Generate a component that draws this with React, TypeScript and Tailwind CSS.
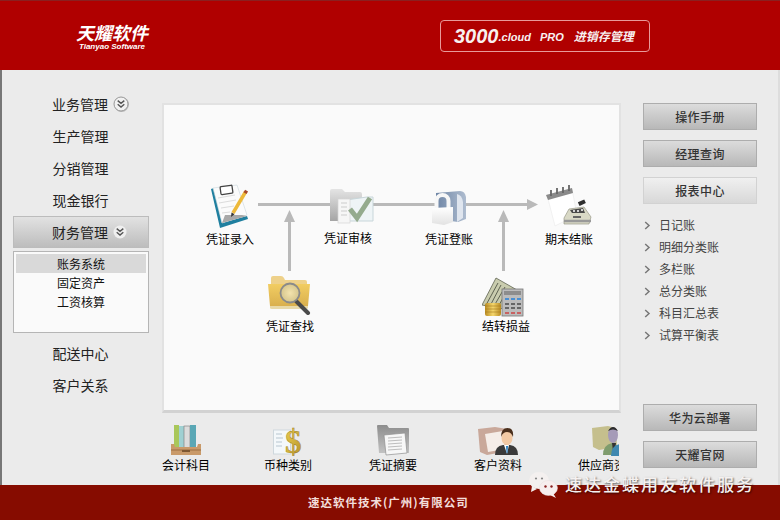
import React from "react";

const FONT = '[font-family:"Noto_Sans_CJK_SC","Liberation_Sans",sans-serif]';

function Chevrons({ flat = false }: { flat?: boolean }) {
  return (
    <svg width="18" height="18" viewBox="0 0 18 18" className="shrink-0">
      {!flat && <circle cx="9.5" cy="9.5" r="7.5" fill="#bbb" />}
      <circle cx="9" cy="9" r={flat ? 6.5 : 7} fill={flat ? "#efefef" : "#f1f1f1"} stroke={flat ? "none" : "#999"} />
      <path d="M5.7 5.6 9 8.4l3.3-2.8M5.7 9.2 9 12l3.3-2.8" fill="none" stroke="#555" strokeWidth="1.4" />
    </svg>
  );
}

function NavItem({ label }: { label: string }) {
  return <div className="flex h-[32px] w-[135px] items-center justify-center text-[14px] text-[#222]">{label}</div>;
}

function GrayButton({ label, light = false }: { label: string; light?: boolean }) {
  return (
    <div
      className={
        light
          ? "flex h-[27px] w-[114px] items-center justify-center border border-[#d2d2d2] bg-gradient-to-b from-[#f0f0f0] to-[#d8d8d8] text-[12px] font-medium tracking-[0.4px] text-[#333]"
          : "flex h-[27px] w-[114px] items-center justify-center border border-[#adadad] bg-gradient-to-b from-[#dcdcdc] to-[#b8b8b8] text-[12px] font-medium tracking-[0.4px] text-[#333]"
      }
    >
      {label}
    </div>
  );
}

function IconEntry() {
  return (
    <svg width="40" height="45" viewBox="0 0 40 45">
      <path d="M1 5 10 44l28-9-1-3-25 7L4 4z" fill="#1f7f9f" />
      <path d="M3 4 27 1l10 30-25 8z" fill="#fbfbfb" stroke="#c9d6dc" strokeWidth=".6" />
      <path d="M12 39l3-8 17 0 5 1z" fill="#a8a8a8" />
      <path d="M8 14l17-3M9 19l17-3M11 24l13-2M12 29l8-1" stroke="#dcdcdc" strokeWidth="1" />
      <rect x="10.500" y="2" width="12" height="8" rx="1" transform="rotate(-8 16 6)" fill="#fff" stroke="#444" strokeWidth="1.300" />
      <path d="M35.500 8 23 29" stroke="#edb93a" strokeWidth="3.500" />
      <path d="M34.300 7l3 1.800" stroke="#a7482b" strokeWidth="3" />
      <path d="M21.500 28.500 24.500 30.300 21 33z" fill="#333" />
    </svg>
  );
}

function IconAudit() {
  return (
    <svg width="46" height="36" viewBox="0 0 46 36">
      <defs>
        <linearGradient id="au" x1="0" y1="0" x2="0" y2="1">
          <stop offset="0" stopColor="#e4e4e4" />
          <stop offset="1" stopColor="#a5a5a5" />
        </linearGradient>
      </defs>
      <path d="M1 3q0-2 2-2h10l3 3h15q2 0 2 2v27H1z" fill="url(#au)" />
      <path d="M10 13 38 9h6v24H12z" fill="#eef4f6" stroke="#c8d6da" strokeWidth="1" />
      <rect x="9" y="11" width="12" height="24" fill="#f6f6f6" stroke="#d5d5d5" strokeWidth=".7" />
      <path d="M12 15h6M12 19h6M12 23h6M12 27h6" stroke="#ccc" />
      <path d="M21 21l7 9L41 10" fill="none" stroke="#94ab8e" strokeWidth="5" />
    </svg>
  );
}

function IconPost() {
  return (
    <svg width="38" height="36" viewBox="0 0 38 36">
      <defs>
        <linearGradient id="po" x1="0" y1="0" x2="1" y2="0">
          <stop offset="0" stopColor="#6f86a6" />
          <stop offset="1" stopColor="#aebccf" />
        </linearGradient>
        <linearGradient id="lk" x1="0" y1="0" x2="0" y2="1">
          <stop offset="0" stopColor="#ffffff" />
          <stop offset="1" stopColor="#e2e2e2" />
        </linearGradient>
      </defs>
      <path d="M6 3 30 1q5 0 6 6v22l-8 3-22-3z" fill="url(#po)" />
      <path d="M27 4q5 1 6 8v16l-6 4z" fill="#dfe5ee" />
      <path d="M6.500 18v-7a6 6 0 0 1 12 0v7" fill="none" stroke="#f7f7f7" strokeWidth="4" />
      <path d="M2 18 23 17v15l-9 3-12-2z" fill="url(#lk)" />
    </svg>
  );
}

function IconClose() {
  return (
    <svg width="46" height="42" viewBox="0 0 46 42">
      <path d="M1 10 26 4l5 26-22 11z" fill="#fff" stroke="#eaeaea" strokeWidth=".6" />
      <path d="M0 10 26 3l1 5L2 15z" fill="#8a8a8a" />
      <path d="M5 11V5M11 9V3M17 8V2M23 6V0" stroke="#666" strokeWidth="1.800" />
      <path d="M18 33 23 24l15-2 7 10-2 7H18z" fill="#d9d9c6" stroke="#8a8a78" strokeWidth=".6" />
      <path d="M24 25l13-2 2 5H26z" fill="#4a4a4a" />
      <rect x="32" y="16" width="7" height="4" transform="rotate(-25 35 17)" fill="#2e2e2e" />
      <path d="M27 26h2M31 26h2M35 25h2" stroke="#fff" strokeWidth="1.500" />
      <path d="M18 36h27" stroke="#999" strokeWidth="2.500" />
      <rect x="27" y="31" width="8" height="2" fill="#666" />
    </svg>
  );
}

function IconSearch() {
  return (
    <svg width="44" height="40" viewBox="0 0 44 40">
      <defs>
        <linearGradient id="fo" x1="0" y1="0" x2="0" y2="1">
          <stop offset="0" stopColor="#f2cd62" />
          <stop offset="1" stopColor="#d7ad4c" />
        </linearGradient>
        <radialGradient id="gl">
          <stop offset="0" stopColor="#f3e3ae" />
          <stop offset="1" stopColor="#d5c58c" />
        </radialGradient>
      </defs>
      <path d="M4 3q0-2 2-2h8q2 0 3 2l1 2h20q2 0 2 2v3H4z" fill="#eed18a" />
      <path d="M1 9h42l-2 22q0 2-3 2H5q-2 0-2-2z" fill="url(#fo)" />
      <path d="M3 31h38v2q0 1-3 1H5q-2 0-2-1z" fill="#e8d9a8" />
      <path d="M29 26 41 38" stroke="#4a4a4a" strokeWidth="4" strokeLinecap="round" />
      <circle cx="23" cy="18" r="9.500" fill="url(#gl)" stroke="#8a8a8a" strokeWidth="1.800" />
    </svg>
  );
}

function IconProfit() {
  return (
    <svg width="44" height="40" viewBox="0 0 44 40">
      <defs>
        <linearGradient id="co" x1="0" y1="0" x2="1" y2="0">
          <stop offset="0" stopColor="#b98b22" />
          <stop offset=".5" stopColor="#f4d66c" />
          <stop offset="1" stopColor="#b98b22" />
        </linearGradient>
      </defs>
      <path d="M0 28 14 1l21 12-8 20z" fill="#c9ccae" stroke="#5f6352" strokeWidth=".8" />
      <path d="M4 28 16 6M8 29 19 8M12 29 23 10M16 30 26 12" stroke="#5f6352" strokeWidth="1" />
      <rect x="20" y="12" width="21" height="27" fill="#bcbcbc" stroke="#777" strokeWidth=".8" />
      <rect x="22" y="14" width="17" height="4" fill="#8d8d8d" />
      <path d="M23 22h4M29 22h4M35 22h4" stroke="#4a8fd2" strokeWidth="2" />
      <path d="M23 27h4M29 27h4M35 27h4M23 31h4M29 31h4M35 31h4" stroke="#666" strokeWidth="2" />
      <path d="M23 36h4M29 36h4M35 36h4" stroke="#c44" strokeWidth="1.500" />
      <rect x="3" y="26" width="16" height="13" rx="2" fill="url(#co)" />
      <path d="M3 29h16M3 32h16M3 35h16" stroke="#a47a1c" strokeWidth=".6" />
    </svg>
  );
}

function IconLedger() {
  return (
    <svg width="30" height="32" viewBox="0 0 30 32">
      <rect x="3" y="1" width="5" height="23" fill="#a9c75a" />
      <rect x="8" y="2" width="5" height="22" fill="#9fd0d2" />
      <rect x="13" y="2" width="6" height="22" fill="#dcdcdc" stroke="#777" strokeWidth=".6" />
      <rect x="19" y="1" width="6" height="23" fill="#5aa7b5" />
      <path d="M0 20h3l1 3h22l1-3h3v11H0z" fill="#c99a6a" />
      <path d="M0 26h30" stroke="#9c6f42" strokeWidth="1" />
      <rect x="11" y="26" width="8" height="2" fill="#7e5731" />
    </svg>
  );
}

function IconDollar() {
  return (
    <svg width="30" height="30" viewBox="0 0 30 30">
      <defs>
        <linearGradient id="go" x1="0" y1="0" x2="1" y2="1">
          <stop offset="0" stopColor="#f0d24e" />
          <stop offset="1" stopColor="#b3902c" />
        </linearGradient>
      </defs>
      <rect x="0.500" y="4" width="17" height="24" fill="#f4f8fa" stroke="#cfd8dd" />
      <path d="M3 8h6M3 12h7M3 16h6M3 20h6" stroke="#b8c6d0" />
      <text x="12" y="26.500" fontFamily="Liberation Serif, serif" fontWeight="700" fontSize="33" fill="url(#go)" stroke="#96761a" strokeWidth=".4">$</text>
    </svg>
  );
}

function IconSummary() {
  return (
    <svg width="32" height="32" viewBox="0 0 32 32">
      <defs>
        <linearGradient id="su" x1="0" y1="0" x2="0" y2="1">
          <stop offset="0" stopColor="#8d8d8d" />
          <stop offset="1" stopColor="#c2c2c2" />
        </linearGradient>
      </defs>
      <path d="M0 2q0-1 1-1h9l2 3h19q1 0 1 1v24H2z" fill="url(#su)" />
      <path d="M7 11 28 9 30 29 9 31z" fill="#f7f7f7" stroke="#8f8f8f" strokeWidth=".7" />
      <path d="M11 14l14-1M11 17l14-1M11 20l14-1M11 23l14-1M11 26l14-1" stroke="#bdbdbd" />
    </svg>
  );
}

function IconCustomer() {
  return (
    <svg width="42" height="30" viewBox="0 0 42 30">
      <path d="M1 3 18 1l12 2 2 22-22 4-7-3z" fill="#c9a89a" />
      <path d="M8 8 26 5l2 18-17 3z" fill="#f5ede8" />
      <path d="M18 29q0-9 8-10h7q8 1 8 10z" fill="#3a3a3a" />
      <path d="M27 19h5l-2 9z" fill="#fff" />
      <path d="M29 20h2l-.5 7h-1z" fill="#2b7fc0" />
      <ellipse cx="30" cy="12" rx="5.500" ry="7" fill="#f2c9a4" />
      <path d="M24 11q0-9 6.500-9T36 11q-2-5-6-5t-6 5z" fill="#4a2f1c" />
    </svg>
  );
}

function IconSupplier() {
  return (
    <svg width="40" height="31" viewBox="0 0 40 31">
      <path d="M1 3 17 1l8 2 1 19-18 3-6-3z" fill="#c5bf8d" />
      <ellipse cx="22" cy="10" rx="5" ry="8" fill="#a59bb8" />
      <path d="M17 6q5-8 10 0-5-3-10 0z" fill="#2c2c2c" />
      <path d="M12 30q0-10 9-12h3l-1 12z" fill="#7f9c6d" />
      <path d="M21 18h4l-1 8h-2z" fill="#333" />
      <path d="M20 31q0-11 9-12h6q5 2 5 12z" fill="#3f88b0" />
    </svg>
  );
}

function BottomItem({ label, children, className }: { label: string; children: React.ReactNode; className: string }) {
  return (
    <div className={"flex w-[72px] shrink-0 flex-col items-center " + className}>
      <div className="flex h-[43px] items-end justify-center">{children}</div>
      <div className="mt-[1px] whitespace-nowrap text-[12px] leading-[16px] text-black">{label}</div>
    </div>
  );
}

export default function App() {
  return (
    <div className={"relative flex h-[520px] w-[780px] flex-col overflow-hidden bg-[#ebebeb] " + FONT}>
      <header className="flex h-[70px] shrink-0 items-center justify-between border-t border-[#8a2020] bg-[#b00000] pl-[76px] pr-[130px]">
        <div className="flex flex-col items-center italic text-white">
          <div className="mt-[2px] text-[18px] font-bold leading-[20px]">天耀软件</div>
          <div className="font-['Liberation_Sans'] text-[8px] font-bold leading-[10px]">Tianyao Software</div>
        </div>
        <div className="flex h-[32px] w-[210px] items-center rounded-[4px] border border-[#e89a9a] pl-[13px] font-['Liberation_Sans'] italic text-[#f8f0f0]">
          <span className="text-[20px] font-bold leading-none">3000</span>
          <span className="mt-[4px] text-[11px] font-bold leading-none">.cloud</span>
          <span className="ml-[9px] mt-[3px] text-[11px] font-bold leading-none">PRO</span>
          <span className={"ml-[10px] mt-[1px] text-[12px] font-bold leading-none " + FONT}>进销存管理</span>
        </div>
      </header>

      <main className="flex min-h-0 flex-1 border-l-2 border-r-2 border-l-[#777777] border-r-[#dddddd]">
        <nav className="flex w-[160px] shrink-0 flex-col pl-[11px] pt-[18px]">
          <div className="flex h-[32px] items-center pl-[39px] text-[14px] text-[#222]">
            <span>业务管理</span>
            <span className="ml-[4px]">
              <Chevrons />
            </span>
          </div>
          <NavItem label="生产管理" />
          <NavItem label="分销管理" />
          <NavItem label="现金银行" />
          <div className="flex h-[32px] w-[136px] items-center border border-[#bcbcbc] bg-gradient-to-b from-[#e2e2e2] to-[#bdbdbd] pl-[38px] text-[14px] text-[#222]">
            <span>财务管理</span>
            <span className="ml-[3px]">
              <Chevrons flat />
            </span>
          </div>
          <div className="mt-[3px] flex h-[82px] w-[136px] flex-col border border-[#b5b5b5] bg-[#fafafa] px-[2px] pt-[2px] text-center text-[12px] leading-[19px] text-[#111]">
            <div className="bg-[#d9d9d9]">账务系统</div>
            <div>固定资产</div>
            <div>工资核算</div>
          </div>
          <div className="mt-[4px]">
            <NavItem label="配送中心" />
            <NavItem label="客户关系" />
          </div>
        </nav>

        <section className="flex w-[459px] shrink-0 flex-col pt-[33px]">
          <div className="h-[310px] shrink-0 border-x-2 border-t-2 border-b-[3px] border-x-[#e2e2e2] border-t-[#e2e2e2] border-b-[#d2d2d2] bg-[#fafafa]">
            <div className="relative h-full w-full">
              <svg className="absolute inset-0" width="455" height="305" viewBox="164 105 455 305">
                <g fill="#b9b9b9">
                  <rect x="258" y="203" width="270" height="3" />
                  <path d="M538 204.500 527 199v11z" />
                  <rect x="288" y="220" width="3" height="51" />
                  <path d="M289.500 210 284 222h11z" />
                  <rect x="502" y="220" width="3" height="51" />
                  <path d="M503.500 210 498 222h11z" />
                </g>
              </svg>
              <div className="absolute left-[36px] top-[79px] flex w-[60px] flex-col items-center">
                <IconEntry />
                <div className="mt-[2px] whitespace-nowrap text-[12px] leading-[16px] text-black">凭证录入</div>
              </div>
              <div className="absolute left-[154px] top-[83px] flex w-[60px] flex-col items-center">
                <div className="ml-[8px]">
                  <IconAudit />
                </div>
                <div className="mt-[6px] whitespace-nowrap text-[12px] leading-[16px] text-black">凭证审核</div>
              </div>
              <div className="absolute left-[255px] top-[85px] flex w-[60px] flex-col items-center">
                <IconPost />
                <div className="mt-[5px] whitespace-nowrap text-[12px] leading-[16px] text-black">凭证登账</div>
              </div>
              <div className="absolute left-[375px] top-[80px] flex w-[60px] flex-col items-center">
                <IconClose />
                <div className="mt-[4px] whitespace-nowrap text-[12px] leading-[16px] text-black">期末结账</div>
              </div>
              <div className="absolute left-[96px] top-[170px] flex w-[60px] flex-col items-center">
                <div className="mr-[2px]">
                  <IconSearch />
                </div>
                <div className="mt-[3px] whitespace-nowrap text-[12px] leading-[16px] text-black">凭证查找</div>
              </div>
              <div className="absolute left-[312px] top-[172px] flex w-[60px] flex-col items-center">
                <div className="mr-[4px]">
                  <IconProfit />
                </div>
                <div className="mt-[1px] whitespace-nowrap text-[12px] leading-[16px] text-black">结转损益</div>
              </div>
            </div>
          </div>
          <div className="-ml-[12px] flex w-[469px] overflow-hidden">
            <BottomItem label="会计科目" className="">
              <IconLedger />
            </BottomItem>
            <BottomItem label="币种类别" className="ml-[30px]">
              <IconDollar />
            </BottomItem>
            <BottomItem label="凭证摘要" className="ml-[33px]">
              <IconSummary />
            </BottomItem>
            <BottomItem label="客户资料" className="ml-[33px]">
              <IconCustomer />
            </BottomItem>
            <BottomItem label="供应商资料" className="ml-[38px]">
              <div className="ml-[6px]">
                <IconSupplier />
              </div>
            </BottomItem>
          </div>
        </section>

        <aside className="ml-[22px] flex w-[114px] shrink-0 flex-col justify-between pb-[17px] pt-[33px]">
          <div className="flex flex-col">
            <div className="flex flex-col gap-[10px]">
              <GrayButton label="操作手册" />
              <GrayButton label="经理查询" />
              <GrayButton label="报表中心" light />
            </div>
            <ul className="mt-[10px] flex flex-col text-[12px] leading-[22px] text-[#444]">
              {["日记账", "明细分类账", "多栏账", "总分类账", "科目汇总表", "试算平衡表"].map((t) => (
                <li key={t} className="flex h-[22px] items-center">
                  <svg width="7" height="9" viewBox="0 0 7 9" className="ml-[1px] mr-[8px]">
                    <path d="M1.200 1 5 4.500 1.200 8" fill="none" stroke="#777" strokeWidth="1.500" />
                  </svg>
                  {t}
                </li>
              ))}
            </ul>
          </div>
          <div className="flex flex-col gap-[10px]">
            <GrayButton label="华为云部署" />
            <GrayButton label="天耀官网" />
          </div>
        </aside>
      </main>

      <footer className="flex h-[35px] shrink-0 items-center bg-[#860c00] pl-[308px]">
        <span className="text-[11.500px] font-bold tracking-[1px] text-[#f3dedb]">速达软件技术(广州)有限公司</span>
      </footer>

      <div className="absolute left-[528px] top-[471px] flex items-center">
        <svg width="32" height="28" viewBox="0 0 32 28">
          <ellipse cx="11" cy="9.500" rx="10" ry="8.500" fill="#f4f0ef" />
          <path d="M4 15l-1 6 6-3z" fill="#f4f0ef" />
          <circle cx="8" cy="7.500" r="1.100" fill="#888" />
          <circle cx="14" cy="7.500" r="1.100" fill="#888" />
          <ellipse cx="20.500" cy="17" rx="9" ry="7.500" fill="#f7eeee" stroke="#e8dede" strokeWidth=".5" />
          <path d="M25 22l3 5-6-3z" fill="#f7eeee" />
          <circle cx="17.500" cy="15.500" r="1.200" fill="#8a2020" />
          <circle cx="23.500" cy="15.500" r="1.200" fill="#8a2020" />
        </svg>
        <span className="mb-[3px] ml-[5px] text-[17px] font-medium leading-none tracking-[2px] text-[#f5f1f0] [text-shadow:1px_1px_2px_rgba(0,0,0,0.6)]">速达金蝶用友软件服务</span>
      </div>
    </div>
  );
}
